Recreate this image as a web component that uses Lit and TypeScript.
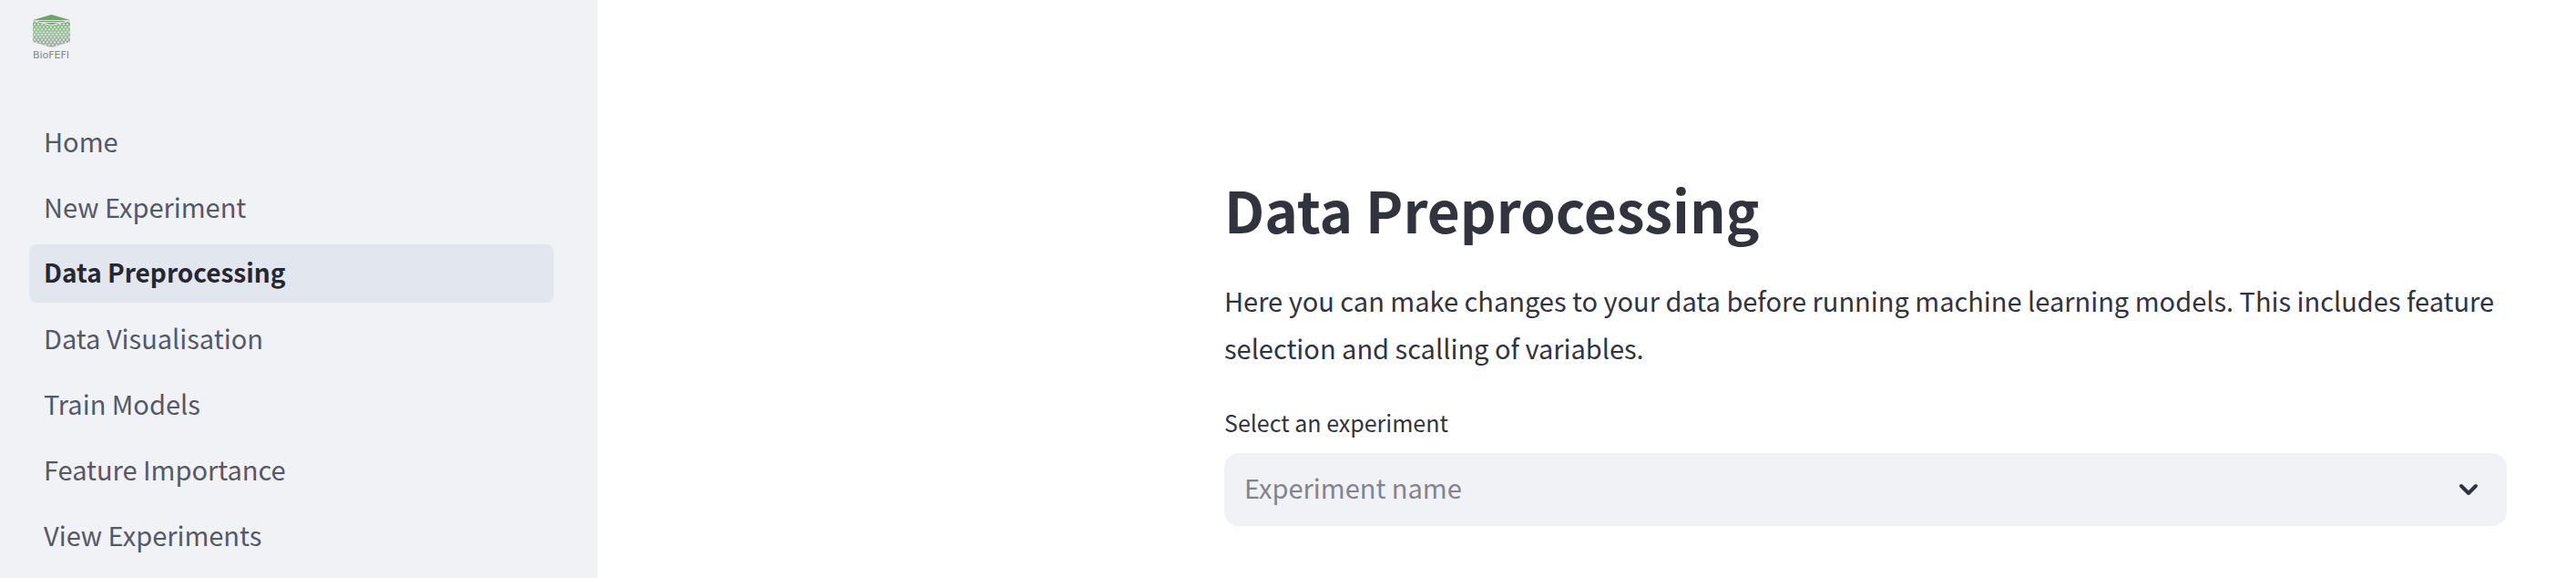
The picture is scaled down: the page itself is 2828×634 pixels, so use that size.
import { LitElement, html, css, svg } from "lit";
import { customElement, property, state } from "lit/decorators.js";
import { classMap } from "lit/directives/class-map.js";

@customElement("brand-logo")
class BrandLogo extends LitElement {
  static styles = css`
    :host {
      display: block;
    }
    .logo {
      display: block;
      width: 48px;
      height: 48px;
      overflow: visible;
    }
    .name {
      font-family: "DejaVu Sans", sans-serif;
      font-size: 11px;
      fill: #85878a;
    }
  `;

  render() {
    const cols = Array.from({ length: 11 }, (_, i) => i);
    return html`
      <svg class="logo" viewBox="0 0 48 48" role="img" aria-label="BioFEFI">
        <defs>
          <linearGradient id="shade" x1="0" y1="0" x2="0" y2="1">
            <stop offset="0" stop-color="#5aa254" />
            <stop offset="0.45" stop-color="#82b27e" />
            <stop offset="1" stop-color="#8b8f8c" />
          </linearGradient>
          <clipPath id="walls">
            <path d="M4 7 L24.500 12 L45 7 V30 L24.500 36 L4 30 Z" />
          </clipPath>
        </defs>
        <path d="M4 6 L24.500 0 L45 6 L24.500 11 Z" fill="#69a864" />
        <path d="M6 6.500 H43 M11 8.500 H38" stroke="#d8e6da" stroke-width="1" />
        <path d="M4 7 L24.500 12 L45 7 V30 L24.500 36 L4 30 Z" fill="url(#shade)" opacity="0.75" />
        <g clip-path="url(#walls)" fill="#f0f2f6" opacity="0.8">
          ${cols.map((c) =>
            cols.map(
              (r) => svg`<circle cx=${4 + c * 4 + (r % 2) * 2} cy=${8 + r * 2.8} r="1.050" />`
            )
          )}
        </g>
        <text class="name" x="24" y="48" text-anchor="middle">BioFEFI</text>
      </svg>
    `;
  }
}

@customElement("side-nav")
class SideNav extends LitElement {
  @property({ type: Array }) pages: string[] = [];
  @property() current = "";

  static styles = css`
    :host {
      display: block;
    }
    .list {
      display: flex;
      flex-direction: column;
      gap: 8px;
      margin: 0;
      padding: 0;
      list-style: none;
    }
    .link {
      display: block;
      padding: 0 16px 4px;
      border-radius: 8px;
      color: #555867;
      font-size: 29px;
      line-height: 60px;
      text-decoration: none;
      white-space: nowrap;
    }
    .link:hover,
    .active {
      background: #e1e6ef;
    }
    .active {
      color: #262730;
      font-size: 28px;
      font-weight: 700;
    }
  `;

  render() {
    return html`
      <nav aria-label="Pages">
        <ul class="list">
          ${this.pages.map((page) => {
            const active = page === this.current;
            return html`<li>
              <a
                class=${classMap({ link: true, active })}
                href="#${page.toLowerCase().replace(/ /g, "-")}"
                aria-current=${active ? "page" : "false"}
                >${page}</a
              >
            </li>`;
          })}
        </ul>
      </nav>
    `;
  }
}

@customElement("select-field")
class SelectField extends LitElement {
  @property() label = "";
  @property() placeholder = "";

  static styles = css`
    :host {
      display: block;
    }
    .label {
      display: block;
      margin-bottom: 14px;
      font-size: 25px;
      line-height: 40px;
    }
    .field {
      display: grid;
      align-items: center;
    }
    .control,
    .chevron {
      grid-area: 1 / 1;
    }
    .control {
      appearance: none;
      width: 100%;
      height: 80px;
      margin: 0;
      padding: 0 80px 6px 22px;
      border: 0;
      border-radius: 16px;
      background: #f0f2f6;
      color: #83848c;
      font: inherit;
      font-size: 29px;
    }
    .chevron {
      justify-self: end;
      width: 40px;
      height: 40px;
      margin-right: 22px;
      pointer-events: none;
    }
  `;

  render() {
    return html`
      <label class="label" for="choice">${this.label}</label>
      <div class="field">
        <select class="control" id="choice">
          <option value="">${this.placeholder}</option>
        </select>
        <svg class="chevron" viewBox="0 0 40 40" aria-hidden="true">
          <path
            d="M12 16 L20 24 L28 16"
            fill="none"
            stroke="#31333f"
            stroke-width="4"
            stroke-linecap="round"
            stroke-linejoin="round"
          />
        </svg>
      </div>
    `;
  }
}

@customElement("app-root")
class AppRoot extends LitElement {
  @state() private pages = [
    "Home",
    "New Experiment",
    "Data Preprocessing",
    "Data Visualisation",
    "Train Models",
    "Feature Importance",
    "View Experiments",
  ];

  static styles = css`
    :host {
      display: flex;
      min-height: 100vh;
      background: #ffffff;
      color: #31333f;
      font-family: "Noto Sans CJK SC", "Noto Sans", sans-serif;
    }
    .sidebar {
      box-sizing: border-box;
      flex: 0 0 656px;
      display: flex;
      flex-direction: column;
      gap: 60px;
      padding: 16px 48px 14px 32px;
      background: #f0f2f6;
    }
    .main {
      flex: 1;
      display: flex;
      justify-content: flex-end;
      min-width: 0;
      padding: 189px 76px 57px;
    }
    .content {
      flex: 0 1 1408px;
      min-width: 0;
    }
    .title {
      margin: 0 0 34px;
      font-size: 62px;
      font-weight: 700;
      line-height: 80px;
    }
    .intro {
      margin: 0 0 36px;
      font-size: 29px;
      line-height: 52px;
    }
  `;

  render() {
    return html`
      <aside class="sidebar">
        <brand-logo></brand-logo>
        <side-nav .pages=${this.pages} current="Data Preprocessing"></side-nav>
      </aside>
      <main class="main">
        <div class="content">
          <h1 class="title">Data Preprocessing</h1>
          <p class="intro">
            Here you can make changes to your data before running machine learning models. This
            includes feature selection and scalling of variables.
          </p>
          <select-field label="Select an experiment" placeholder="Experiment name"></select-field>
        </div>
      </main>
    `;
  }
}
